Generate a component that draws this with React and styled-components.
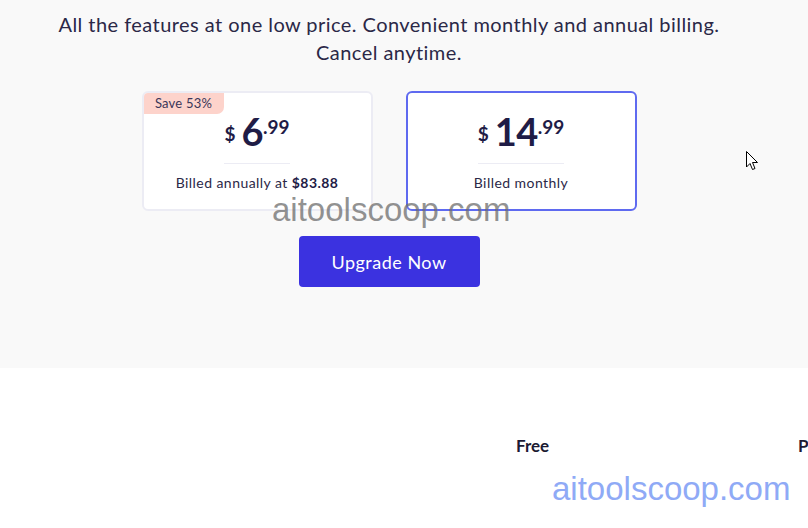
import React from "react";
import styled, { createGlobalStyle } from "styled-components";

const Global = createGlobalStyle`
  html, body { margin: 0; padding: 0; background: #ffffff; }
  body { font-family: "Lato", "Noto Sans", sans-serif; color: #28254a; }
  * { box-sizing: border-box; }
`;

const Page = styled.div`
  position: relative;
  width: 808px;
  height: 528px;
  overflow: hidden;
  background: #ffffff;
`;

const PricingSection = styled.section`
  background: #f9f9f9;
  padding: 10px 30px 81px 0;
  display: flex;
  flex-direction: column;
  align-items: center;
`;

const Lead = styled.p`
  margin: 0;
  font-size: 20px;
  line-height: 28px;
  text-align: center;
  color: #2b2847;
  letter-spacing: 0.45px;
`;

const Cards = styled.div`
  display: flex;
  gap: 33px;
  margin-top: 25px;
`;

const Card = styled.div`
  position: relative;
  width: 231px;
  height: 120px;
  background: #ffffff;
  border: 2px solid ${(p) => (p.$active ? "#5f6af0" : "#ececf4")};
  border-radius: 6px;
  padding-top: 20px;
  display: flex;
  flex-direction: column;
  align-items: center;
  overflow: hidden;
`;

const Badge = styled.span`
  position: absolute;
  top: 0;
  left: 0;
  width: 80px;
  height: 21px;
  background: #fdd3cb;
  border-bottom-right-radius: 7px;
  font-size: 13px;
  line-height: 21px;
  text-align: center;
  color: #3a3658;
  letter-spacing: 0.2px;
`;

const PriceBlock = styled.div`
  display: flex;
  align-items: flex-start;
  padding-bottom: 14px;
  border-bottom: 1px solid #ececf4;
  color: #1f1c46;
  font-weight: 700;
`;

const Currency = styled.span`
  font-size: 19px;
  line-height: 19px;
  margin-top: 11px;
  margin-right: 6px;
`;

const Amount = styled.span`
  font-size: 38px;
  line-height: 36px;
  letter-spacing: -0.5px;
`;

const Cents = styled.span`
  font-size: 19px;
  line-height: 19px;
  margin-top: 4px;
`;

const Billed = styled.div`
  margin-top: 9px;
  font-size: 14px;
  line-height: 20px;
  letter-spacing: 0.45px;
  color: #2b2847;
  b { font-weight: 700; color: #1f1c46; }
`;

const UpgradeButton = styled.button`
  margin-top: 25px;
  width: 181px;
  height: 51px;
  border: none;
  border-radius: 4px;
  background: #3b32e0;
  color: #ffffff;
  font-family: "Lato", "Noto Sans", sans-serif;
  font-size: 18px;
  letter-spacing: 0.5px;
  cursor: pointer;
`;

const CompareSection = styled.section`
  background: #ffffff;
  padding-top: 66px;
  display: grid;
  grid-template-columns: 516px 282px 1fr;
`;

const PlanHead = styled.div`
  font-size: 17px;
  line-height: 24px;
  font-weight: 700;
  color: #1c1a33;
  white-space: nowrap;
  overflow: hidden;
`;

const Watermark = styled.div`
  position: absolute;
  left: ${(p) => p.$x}px;
  top: ${(p) => p.$y}px;
  font-family: "Liberation Sans", Arial, sans-serif;
  font-size: 33px;
  line-height: 33px;
  color: ${(p) => p.$color};
  white-space: nowrap;
  pointer-events: none;
`;

const Cursor = styled.svg`
  position: absolute;
  left: 746px;
  top: 151px;
`;

function PriceCard({ active, badge, amount, cents, children }) {
  return (
    <Card $active={active}>
      {badge && <Badge>{badge}</Badge>}
      <PriceBlock>
        <Currency>$</Currency>
        <Amount>{amount}</Amount>
        <Cents>.{cents}</Cents>
      </PriceBlock>
      <Billed>{children}</Billed>
    </Card>
  );
}

export default function App() {
  return (
    <Page>
      <Global />
      <PricingSection>
        <Lead>
          All the features at one low price. Convenient monthly and annual billing.
          <br />
          Cancel anytime.
        </Lead>
        <Cards>
          <PriceCard badge="Save 53%" amount="6" cents="99">
            Billed annually at <b>$83.88</b>
          </PriceCard>
          <PriceCard active amount="14" cents="99">
            Billed monthly
          </PriceCard>
        </Cards>
        <UpgradeButton>Upgrade Now</UpgradeButton>
      </PricingSection>
      <CompareSection>
        <div />
        <PlanHead>Free</PlanHead>
        <PlanHead>Premium</PlanHead>
      </CompareSection>
      <Watermark $x={272} $y={193} $color="rgba(110,110,110,0.75)">aitoolscoop.com</Watermark>
      <Watermark $x={552} $y={472} $color="#8faaf6">aitoolscoop.com</Watermark>
      <Cursor width="13" height="20" viewBox="0 0 13 20">
        <path d="M0.5 0.5 L0.5 16 L4 12.5 L6.5 18.5 L9 17.5 L6.5 11.5 L11.5 11.5 Z" fill="#ffffff" stroke="#000000" strokeWidth="1" strokeLinejoin="miter" />
      </Cursor>
    </Page>
  );
}
